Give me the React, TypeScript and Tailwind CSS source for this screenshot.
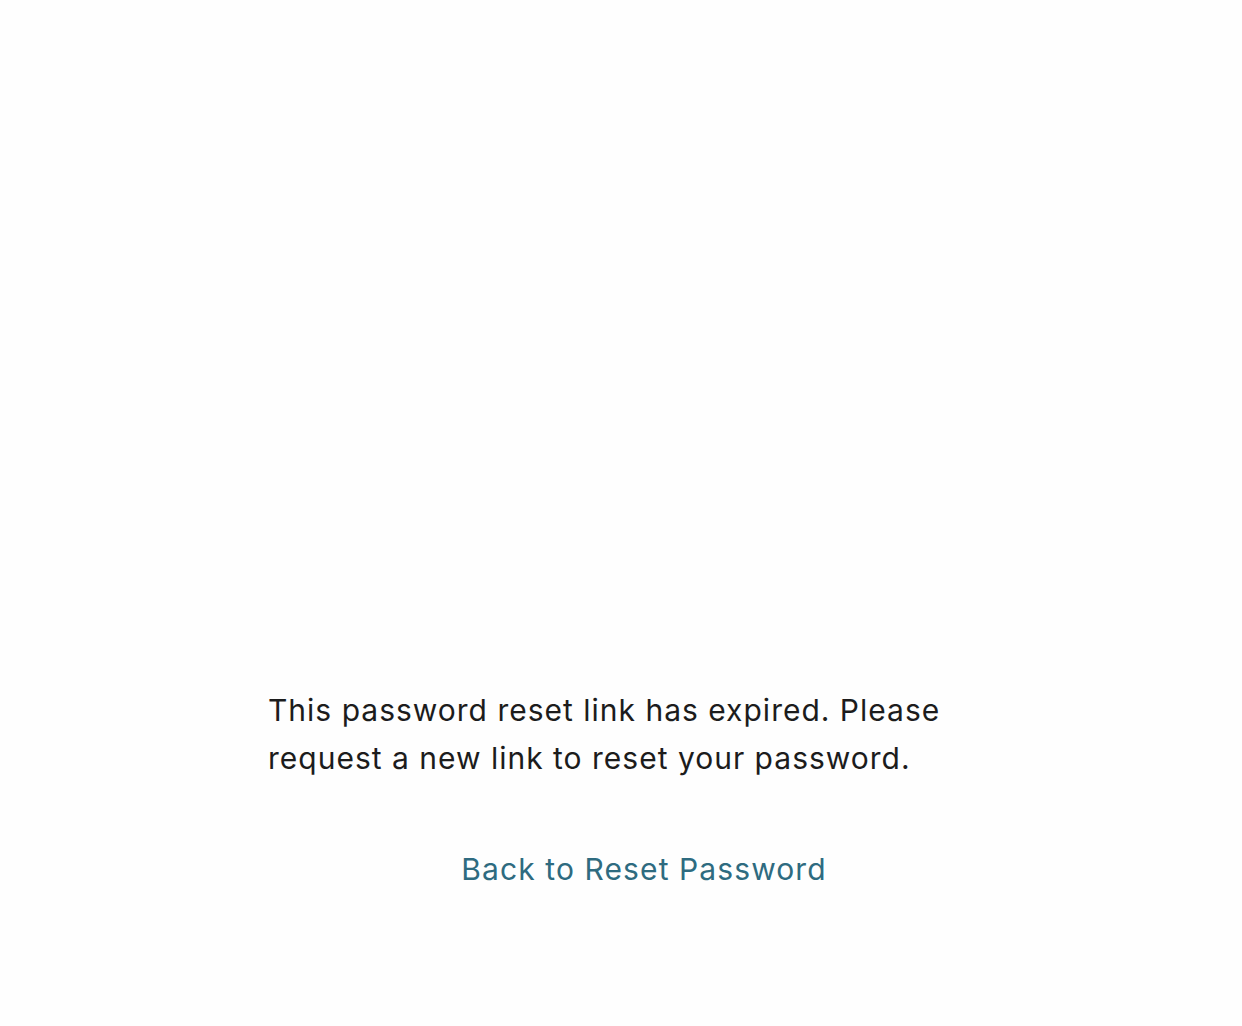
import React from 'react';

export default function App() {
    return (
        <div className="min-h-screen bg-[#fefefe] font-['Inter',sans-serif]">
            <div className="pt-[686px] pl-[268px]">
                <div className="w-[752px] flex flex-col">
                    <p className="text-[30px] leading-[48px] tracking-[1px] text-[#1c1c1c] w-[720px]">
                        This password reset link has expired. Please request a new link to reset your password.
                    </p>
                    <a href="#" className="mt-[67px] self-center text-[30px] leading-[40px] tracking-[1.1px] text-[#2e6b80]">
                        Back to Reset Password
                    </a>
                </div>
            </div>
        </div>
    );
}
